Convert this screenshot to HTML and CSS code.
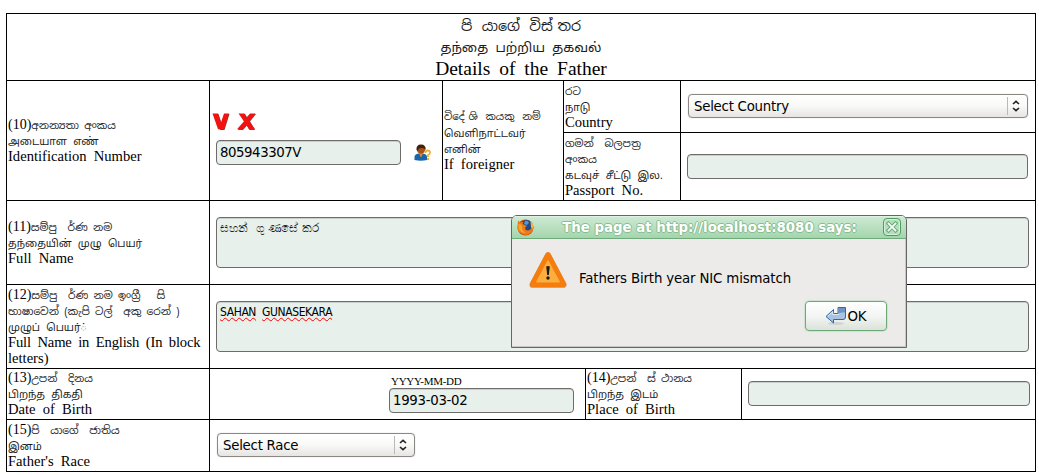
FILE: index.html
```html
<!DOCTYPE html>
<html lang="si">
<head>
<meta charset="utf-8">
<title>Details of the Father</title>
<link rel="stylesheet" href="styles.css">
</head>
<body>
<main class="form">
  <header class="row title">
    <div class="si">පි  යාගේ  විස් තර</div>
    <div class="ta">தந்தை பற்றிய தகவல்</div>
    <div class="en">Details of the Father</div>
  </header>

  <section class="row row-id">
    <div class="cell label">
      <div class="si"><span class="num">(10)</span>අනන්‍යතා අංකය</div>
      <div class="ta">அடையாள எண்</div>
      <div class="en">Identification Number</div>
    </div>
    <div class="cell id-cell">
      <div class="marks">
        <svg width="45" height="20" viewBox="0 0 45 20">
          <path class="mark-shadow" d="M1.500 2h5l3 9 3-9h5l-5 16H8z M27.500 2h5.500l2.500 4 3.500-4h5l-6 7.500 5 8.500h-5.500l-2.500-4.500-4 4.500h-5l6.500-8z"/>
          <path class="mark" d="M.5 1.500h5.500l3 9 3-9h5l-5 15.800H6z M26.500 1.500h6l2 4 3.500-4h5.500l-6 7.500 5.500 8.300h-6l-2.500-4-4 4h-5.500l7-8z"/>
        </svg>
      </div>
      <div class="id-line">
        <div class="field id-field">805943307V</div>
        <svg width="17" height="17" viewBox="0 0 17 17">
          <path d="M.5 16v-3q0-3 4-3.500h4.500q4 .5 4 3.500v3q-6 1.500-12.500 0" fill="#1766ad"/>
          <path d="M5 9h4l-1.500 4h-1z" fill="#d8892e"/>
          <circle cx="7" cy="5.500" r="4" fill="#a65316"/>
          <path d="M2.500 6Q2 .5 7 .5t4.700 5.500Q10 3.500 7.500 4 4.500 4 3.500 7z" fill="#42210d"/>
          <path d="M11.500 9q0-2.500 2.200-2.500T16 8.700q0 1.500-2 2.300v2" fill="none" stroke="#edb233" stroke-width="1.800"/>
          <circle cx="14" cy="15" r="1.200" fill="#edb233"/>
        </svg>
      </div>
    </div>
    <div class="cell label foreign">
      <div class="si">විදේ ශි  කයකු  නම්</div>
      <div class="ta">வெளிநாட்டவர்</div>
      <div class="ta">எனின்</div>
      <div class="en">If foreigner</div>
    </div>
    <div class="foreign-grid">
      <div class="cell label country">
        <div class="si">රට</div>
        <div class="ta">நாடு</div>
        <div class="en">Country</div>
      </div>
      <div class="cell country-control">
        <div class="select"><span>Select Country</span><i class="arrows"><svg width="8" height="12" viewBox="0 0 8 12"><path d="M1 4l3-2.700L7 4M1 8l3 2.700L7 8"/></svg></i></div>
      </div>
      <div class="cell label passport">
        <div class="si">ගමන්  බලපත්‍ර</div>
        <div class="si">අංකය</div>
        <div class="ta">கடவுச் சீட்டு இல.</div>
        <div class="en">Passport No.</div>
      </div>
      <div class="cell passport-control"><div class="field"></div></div>
    </div>
  </section>

  <section class="row row-name">
    <div class="cell label">
      <div class="si"><span class="num">(11)</span>සම්පු  ර්ණ නම</div>
      <div class="ta">தந்தையின் முழு பெயர்</div>
      <div class="en">Full Name</div>
    </div>
    <div class="cell area-cell"><div class="area area-si">සහන්  ගු ණසේ කර</div></div>
  </section>

  <section class="row row-name">
    <div class="cell label">
      <div class="si"><span class="num">(12)</span>සම්පු  ර්ණ නම ඉංග්‍රී   සි</div>
      <div class="si">භාෂාවෙන් (කැපි ටල්  අකු රෙන් )</div>
      <div class="ta">முழுப் பெயர்◌்</div>
      <div class="en tight">Full Name in English (In block</div>
      <div class="en">letters)</div>
    </div>
    <div class="cell area-cell"><div class="area area-en"><span class="typo">SAHAN</span> <span class="typo">GUNASEKARA</span></div></div>
  </section>

  <section class="row row-birth">
    <div class="cell label">
      <div class="si"><span class="num">(13)</span>උපන්  දිනය</div>
      <div class="ta">பிறந்த திகதி</div>
      <div class="en">Date of Birth</div>
    </div>
    <div class="cell date-cell">
      <div class="date-hint">YYYY-MM-DD</div>
      <div class="field date-field">1993-03-02</div>
    </div>
    <div class="cell label">
      <div class="si"><span class="num">(14)</span>උපන්  ස් ථානය</div>
      <div class="ta">பிறந்த இடம்</div>
      <div class="en">Place of Birth</div>
    </div>
    <div class="cell place-control"><div class="field"></div></div>
  </section>

  <section class="row row-race">
    <div class="cell label">
      <div class="si"><span class="num">(15)</span>පි  යාගේ  ජාතිය</div>
      <div class="ta">இனம்</div>
      <div class="en">Father's Race</div>
    </div>
    <div class="cell race-control">
      <div class="select race"><span>Select Race</span><i class="arrows"><svg width="8" height="12" viewBox="0 0 8 12"><path d="M1 4l3-2.700L7 4M1 8l3 2.700L7 8"/></svg></i></div>
    </div>
  </section>
</main>

<div class="dialog">
  <div class="titlebar">
    <svg class="fox" width="17" height="17" viewBox="0 0 17 17">
      <circle cx="8.500" cy="8.500" r="8" fill="#c94a10"/>
      <circle cx="9.500" cy="6.500" r="5.500" fill="#224a86"/>
      <path d="M8 2q3-1 4 2l-2 2-3-1z" fill="#4f9ad6"/>
      <path d="M1 1.500l2.500 2 3-.5-1 2 4.500 2-2 1.500q0 2.500 2.500 3 4 0 4.500-5l1.700 1q-.5 7-7.700 8.500Q0 15 .5 7z" fill="#ee7a18"/>
      <path d="M1.500 5l3 .5L5 8q0 4 4 6-6 0-7.500-5z" fill="#f9a52c"/>
      <path d="M13.500 2q3.500 3 2.500 8l-2-2z" fill="#f6b73a"/>
    </svg>
    <div class="dialog-title">The page at http://localhost:8080 says:</div>
    <div class="close"><svg width="12" height="12" viewBox="0 0 12 12"><path class="x-edge" d="M2.500 2.500l7 7m0-7l-7 7"/><path class="x-fill" d="M2.500 2.500l7 7m0-7l-7 7"/></svg></div>
  </div>
  <div class="message">
    <svg width="40" height="39" viewBox="0 0 40 39">
      <path d="M20 4.500L35.500 34H4.500z" fill="none" stroke="#b9a99b" stroke-width="6" stroke-linejoin="round"/>
      <path d="M20 4L35.500 33.200H4.500z" fill="#f57900" stroke="#f57d0d" stroke-width="5.600" stroke-linejoin="round"/>
      <path d="M20 9.500L31.500 31H8.500z" fill="#fcaf3e" stroke="#fcaf3e" stroke-width="1" stroke-linejoin="round"/>
      <path d="M18.200 15.500q1.800-1 3.600 0L20.800 24h-1.600z" fill="#1e1a12"/><circle cx="20" cy="27" r="1.700" fill="#1e1a12"/>
    </svg>
    <span>Fathers Birth year NIC mismatch</span>
  </div>
  <div class="ok">
    <svg width="22" height="20" viewBox="0 0 22 20">
      <ellipse cx="11" cy="17.500" rx="8" ry="1.500" fill="#cfd3cf"/>
      <path d="M1 10.500l7.500-7v4H13v-6h7.500V11q0 2.500-2.500 2.500H8.500V17z" fill="#a9c3e2" stroke="#3465a4" stroke-linejoin="round"/>
      <path d="M13.500 2h6.500v4.500h-4V7h-2.500z" fill="#6f95c5"/>
      <path d="M2.700 10.500L7.700 5.800V8.500H14" fill="none" stroke="#e2ecf6"/>
    </svg>
    <span>OK</span>
  </div>
</div>
</body>
</html>
```
FILE: styles.css
```css
* { box-sizing: border-box; }
body {
  margin: 0;
  padding: 13px 0 0 6px;
  background: #fff;
  color: #000;
  font-family: "Liberation Serif", serif;
}
.form { width: 1030px; border: solid #000; border-width: 1px 0 0 1px; }
.row { display: grid; }
.cell { border: solid #000; border-width: 0 1px 1px 0; min-width: 0; }

.label {
  display: flex;
  flex-direction: column;
  justify-content: center;
  padding-left: 1px;
  line-height: 16px;
  white-space: pre;
  overflow: hidden;
}
.si, .ta { color: #1c1c1c; font-family: "Noto Sans Sinhala", "Noto Sans Tamil", "Noto Sans", "DejaVu Sans", sans-serif; }
.si { height: 16px; font-size: 10.6px; }
.ta { height: 16px; font-size: 10.5px; word-spacing: 1px; }
.en, .num { color: #000; font-family: "Liberation Serif", serif; font-size: 14.6px; }
.num { font-size: 14px; }
.en { margin: -1px 0 1px; word-spacing: 3.5px; }
.tight { letter-spacing: -.15px; word-spacing: 3px; }

.title {
  height: 67px;
  border: solid #000;
  border-width: 0 1px 1px 0;
  grid-template-rows: 22px 21px 22px;
  padding-top: 1px;
  text-align: center;
  line-height: 22px;
  white-space: pre;
  overflow: hidden;
}
.title .si { height: 22px; font-size: 14.3px; word-spacing: -2.4px; }
.title .ta { height: 22px; font-size: 13.3px; word-spacing: .5px; }
.title .en { margin: 0; font-size: 19.5px; word-spacing: 4px; }

.row-id { height: 120px; grid-template-columns: 203px 233px 121px 472px; }
.foreign-grid { display: grid; grid-template: 52px 68px / 117px 355px; }
.foreign .si { font-size: 10.2px; word-spacing: -1.2px; }
.row-name { height: 84px; grid-template-columns: 203px 826px; }
.row-birth { height: 51px; grid-template-columns: 203px 376px 156px 294px; }
.row-race { height: 52px; grid-template-columns: 203px 826px; }

.field, .area {
  border: 1px solid #6f6b6b;
  border-radius: 4px;
  background: #e7f0ea;
  box-shadow: inset 0 1px #c9cfcb;
  font-family: "DejaVu Sans", sans-serif;
  font-size: 13.33px;
  letter-spacing: -.3px;
}
.field { height: 25px; padding-left: 3px; line-height: 23px; }

.id-cell { padding: 31px 0 0 2px; }
.marks { height: 28px; }
.marks svg { display: block; }
.mark { fill: #f31212; }
.mark-shadow { fill: #7a4540; }
.id-line { display: flex; align-items: center; gap: 13px; padding-left: 4px; }
.id-field { width: 185px; letter-spacing: -.45px; }

.country-control { padding: 13px 7px 0; }
.passport-control { padding: 21px 7px 0 6px; }
.place-control { padding: 12px 5px 0 6px; }
.race-control { padding: 13px 0 0 7px; }

.select {
  display: flex;
  justify-content: space-between;
  align-items: center;
  height: 24px;
  padding-left: 5px;
  border: 1px solid #8b8884;
  border-radius: 4px;
  background: linear-gradient(#fff, #f9f9f8 48%, #e6e5e3);
  box-shadow: 0 0 1px #aaa;
  font: 13.33px/22px "DejaVu Sans", sans-serif;
  letter-spacing: -.25px;
}
.select span { padding-top: 1px; }
.race { width: 198px; }
.arrows { display: flex; align-items: center; justify-content: center; width: 20px; height: 18px; padding-right: 3px; border-left: 1px solid #bbb8b5; }
.arrows path { fill: none; stroke: #222; stroke-width: 1.6; }

.area-cell { padding: 16px 6px 0; }
.area { height: 51px; padding: 3px; line-height: 15px; white-space: pre; }
.area-si { color: #1c1c1c; font-size: 12px; letter-spacing: normal; }
.area-en { font-family: "DejaVu Sans Condensed", "DejaVu Sans", sans-serif; font-size: 12px; font-stretch: condensed; letter-spacing: -.4px; word-spacing: 3px; }
.typo { text-decoration: underline wavy #f00 1px; text-underline-offset: 1px; text-decoration-skip-ink: none; }

.date-cell { padding: 6px 0 0 179px; }
.date-hint { height: 13px; padding-left: 2px; font-size: 11px; line-height: 13px; letter-spacing: -.3px; }
.date-field { width: 185px; }

/* Alert window floating over the form */
.dialog {
  position: absolute;
  left: 511px;
  top: 215px;
  width: 396px;
  height: 133px;
  border: 1px solid #696565;
  border-radius: 6px 6px 0 0;
  background: #edebea;
  box-shadow: inset -1px -1px #cbc7c6;
  font-family: "DejaVu Sans", sans-serif;
  overflow: hidden;
}
.titlebar {
  display: grid;
  grid-template-columns: 26px 1fr 24px;
  align-items: center;
  height: 23px;
  border-bottom: 1px solid #70aa7b;
  background: linear-gradient(#cfebd4, #a3d5ad);
  box-shadow: inset 0 1px #e0f3e3;
}
.fox { margin-left: 5px; }
.dialog-title {
  padding: 1px 1px 0 0;
  color: #fff;
  font-size: 13.33px;
  font-weight: bold;
  line-height: 21px;
  text-align: center;
  white-space: nowrap;
  text-shadow: 1px 0 #86bd91, -1px 0 #86bd91, 0 1px #86bd91, 0 -1px #86bd91;
}
.close { display: grid; place-items: center; width: 18px; height: 18px; margin-left: 1px; border: 1px solid #509b60; border-radius: 4px; background: #b4dfbc; box-shadow: inset 0 0 0 1px #d5eeda; }
.close path { fill: none; stroke-linecap: square; }
.x-edge { stroke: #65a873; stroke-width: 3.8; }
.x-fill { stroke: #f4fbf5; stroke-width: 1.8; }
.message { display: flex; align-items: flex-start; height: 62px; padding: 12px 0 0 16px; font-size: 13.33px; letter-spacing: -.15px; }
.message span { margin: 20px 0 0 11px; line-height: 16px; }
.ok {
  display: flex;
  align-items: center;
  justify-content: center;
  width: 82px;
  height: 30px;
  margin-left: 293px;
  border: 1px solid #6baa77;
  border-radius: 4px;
  background: linear-gradient(#fff, #f3f5f2 50%, #dde2dc);
  box-shadow: 0 0 1px 1px #c9e4ce;
  font-size: 13.33px;
}
```
